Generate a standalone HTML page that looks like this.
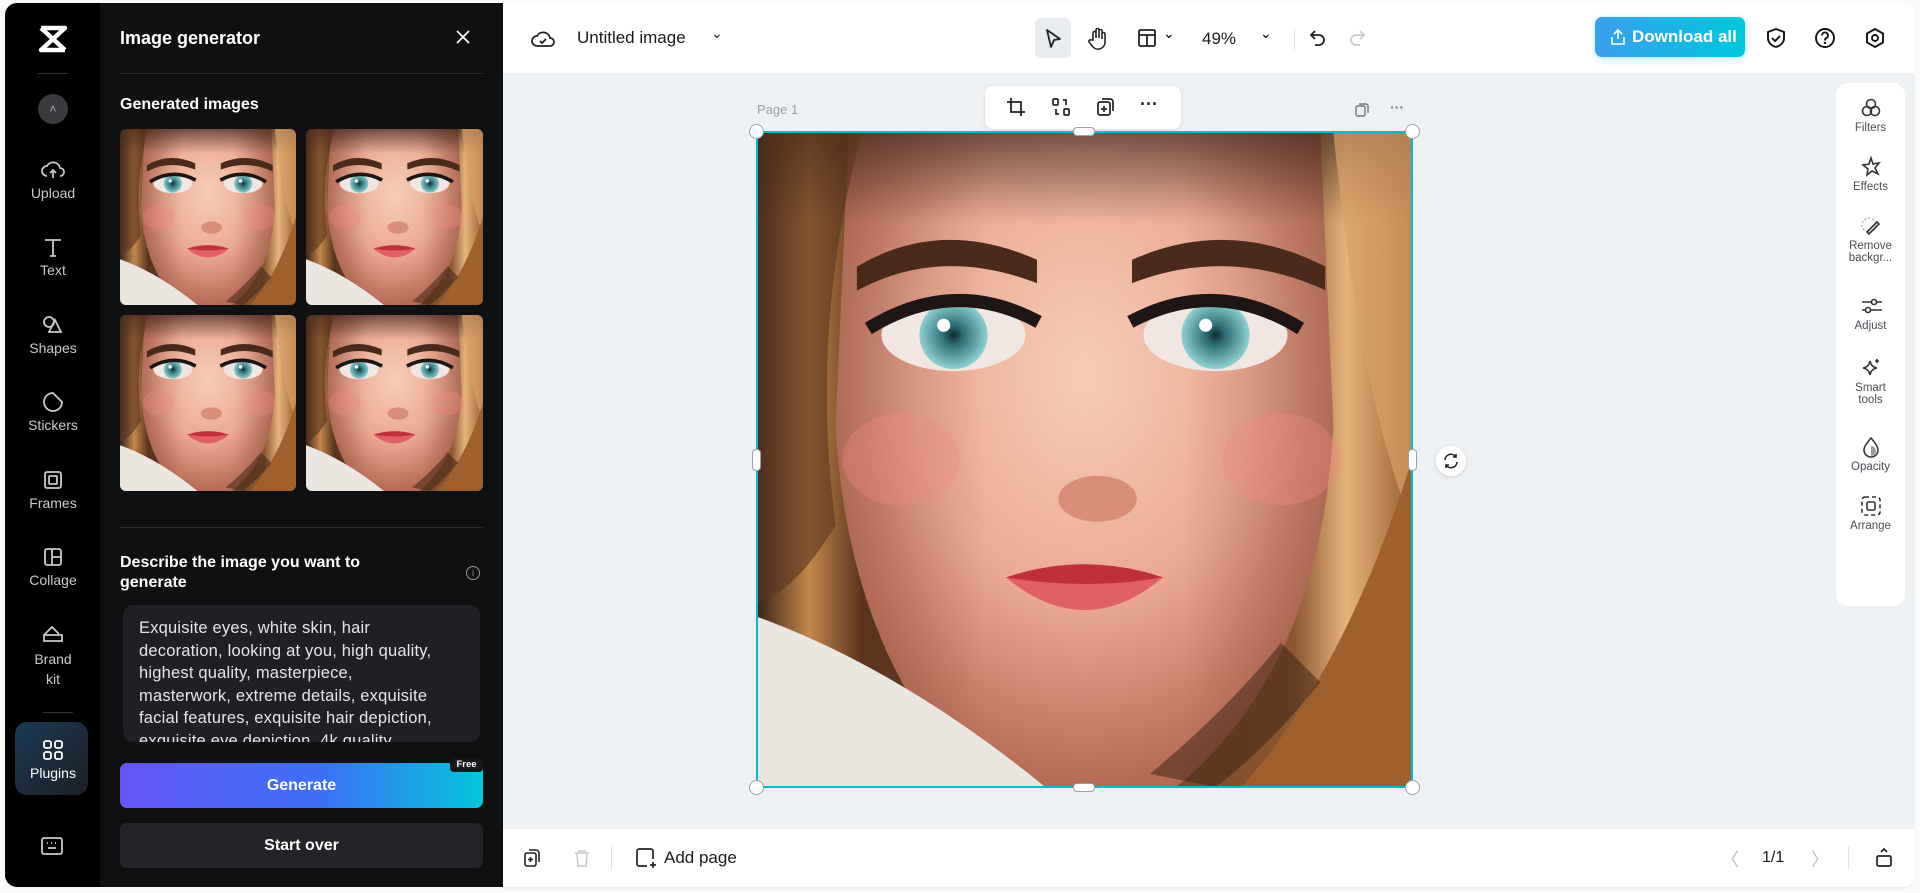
<!DOCTYPE html>
<html><head><meta charset="utf-8"><style>
*{box-sizing:border-box;margin:0;padding:0}
body{width:1920px;height:893px;background:#fafafa;font-family:"Liberation Sans",sans-serif;position:relative;overflow:hidden}
.a{position:absolute}
.rail{left:5px;top:3px;width:96px;height:884px;background:#000;border-radius:12px 0 0 12px}
.panel{left:100px;top:3px;width:403px;height:884px;background:#0f1012}
.ri{position:absolute;left:0;width:96px;text-align:center;color:#c9cacd;font-size:14px}
.ri svg{display:block;margin:0 auto 4px}
.top{left:503px;top:3px;width:1412px;height:70px;background:#fff;border-radius:0 12px 0 0}
.canvas{left:503px;top:73px;width:1412px;height:756px;background:#eef1f4}
.bot{left:503px;top:829px;width:1412px;height:58px;background:#fff;border-radius:0 0 12px 0;box-shadow:0 1px 2px rgba(0,0,0,.08)}
.rp{left:1836px;top:83px;width:69px;height:523px;background:#fff;border-radius:12px}
.rpi{position:absolute;left:0;width:69px;text-align:center;font-size:11.5px;color:#4a4d55;line-height:12px}
.rpi svg{display:block;margin:0 auto 3px}
.h{position:absolute;background:#fff;border:1px solid #9aa0a6}
</style></head><body>
<svg width="0" height="0" style="position:absolute">
<defs>
<linearGradient id="hair" x1="0" x2="1"><stop offset="0" stop-color="#3a2418"/><stop offset=".08" stop-color="#c4874a"/><stop offset=".16" stop-color="#5a341e"/><stop offset=".5" stop-color="#6b4028"/><stop offset=".82" stop-color="#8c5630"/><stop offset=".9" stop-color="#e6b47c"/><stop offset="1" stop-color="#9a5e30"/></linearGradient>
<linearGradient id="hairtop" x1="0" y1="0" x2="0" y2="1"><stop offset="0" stop-color="#2a1a14" stop-opacity=".6"/><stop offset="1" stop-color="#2a1a14" stop-opacity="0"/></linearGradient>
<radialGradient id="skin" cx=".5" cy=".38" r=".62"><stop offset="0" stop-color="#f6cdb8"/><stop offset=".55" stop-color="#eba994"/><stop offset="1" stop-color="#b66a55"/></radialGradient>
<radialGradient id="iris" cx=".5" cy=".5" r=".5"><stop offset="0" stop-color="#0f2a30"/><stop offset=".3" stop-color="#2f7078"/><stop offset="1" stop-color="#8fd0d2"/></radialGradient>
<linearGradient id="shade" x1="0" x2="1"><stop offset="0" stop-color="#7a3c2c" stop-opacity=".35"/><stop offset=".3" stop-color="#7a3c2c" stop-opacity="0"/><stop offset=".7" stop-color="#7a3c2c" stop-opacity="0"/><stop offset="1" stop-color="#7a3c2c" stop-opacity=".35"/></linearGradient>
<symbol id="face" viewBox="0 0 100 100" preserveAspectRatio="none">
<rect width="100" height="100" fill="url(#hair)"/>
<path d="M14 0 Q50 -3 86 0 L88 45 Q86 82 64 100 L34 100 Q14 80 12 45Z" fill="url(#skin)"/>
<path d="M14 0 Q50 -3 86 0 L88 45 Q86 82 64 100 L34 100 Q14 80 12 45Z" fill="url(#shade)"/>
<rect width="100" height="14" fill="url(#hairtop)"/>
<path d="M0 0 L16 0 Q8 30 12 60 Q6 70 0 72Z" fill="#5a3320" opacity=".6"/>
<path d="M88 0 L100 0 L100 60 Q92 40 88 0Z" fill="#d8a068" opacity=".7"/>
<path d="M0 74 Q22 82 44 100 L0 100Z" fill="#ebe6e0"/>
<path d="M100 50 Q90 82 74 100 L100 100Z" fill="#a0602e"/>
<path d="M60 98 Q72 88 80 78 L86 84 Q78 94 70 100Z" fill="#3a2014" opacity=".5"/>
<path d="M16 21 Q28 14 42 20 L42 22 Q28 17 16 23Z" fill="#4a2a1c" stroke="#4a2a1c" stroke-width="1.5"/>
<path d="M58 20 Q72 14 86 21 L86 23 Q72 17 58 22Z" fill="#4a2a1c" stroke="#4a2a1c" stroke-width="1.5"/>
<ellipse cx="30" cy="31" rx="11" ry="5.5" fill="#f0e6e2"/><circle cx="30" cy="31" r="5.2" fill="url(#iris)"/><circle cx="28.5" cy="29.5" r="1" fill="#fff"/>
<ellipse cx="70" cy="31" rx="11" ry="5.5" fill="#f0e6e2"/><circle cx="70" cy="31" r="5.2" fill="url(#iris)"/><circle cx="68.5" cy="29.5" r="1" fill="#fff"/>
<path d="M17 30 Q30 22 43 29" stroke="#1e1614" stroke-width="2" fill="none"/>
<path d="M57 29 Q70 22 83 30" stroke="#1e1614" stroke-width="2" fill="none"/>
<ellipse cx="52" cy="56" rx="6" ry="3.5" fill="#d98e7a"/>
<path d="M38 68 Q50 64 62 68 Q56 70 50 70 Q44 70 38 68Z" fill="#c0303c"/>
<path d="M38 68 Q50 70 62 68 Q50 78 38 68Z" fill="#e06068"/>
<ellipse cx="22" cy="50" rx="9" ry="7" fill="#f08a80" opacity=".35"/><ellipse cx="80" cy="50" rx="9" ry="7" fill="#f08a80" opacity=".35"/>
</symbol>
</defs></svg>

<div class="a rail">
  <svg class="a" style="left:33px;top:22px" width="30" height="28" viewBox="0 0 30 28"><path d="M3 3h24L3 25h24M3 3l24 22" stroke="#fff" stroke-width="4.5" fill="none" stroke-linejoin="round"/></svg>
  <div class="a" style="left:33px;top:70px;width:30px;height:1px;background:#333"></div>
  <div class="a" style="left:33px;top:91px;width:30px;height:30px;border-radius:50%;background:#3a3b3f;color:#aaa;text-align:center;font-size:12px;line-height:30px">&#708;</div>
  <div class="ri" style="top:156px"><svg width="24" height="22" viewBox="0 0 24 22"><path d="M6 17a5 5 0 0 1 0-10 7 7 0 0 1 13 2 4 4 0 0 1 0 8M12 19v-8M9 14l3-3 3 3" stroke="#c9cacd" stroke-width="1.8" fill="none"/></svg>Upload</div>
  <div class="ri" style="top:233px"><svg width="22" height="22" viewBox="0 0 22 22"><path d="M3 4h16M11 4v16M8 20h6" stroke="#c9cacd" stroke-width="1.8" fill="none"/></svg>Text</div>
  <div class="ri" style="top:311px"><svg width="24" height="22" viewBox="0 0 24 22"><circle cx="8" cy="8" r="5" stroke="#c9cacd" stroke-width="1.8" fill="none"/><path d="M14 6l6 12H8z" stroke="#c9cacd" stroke-width="1.8" fill="none"/></svg>Shapes</div>
  <div class="ri" style="top:388px"><svg width="22" height="22" viewBox="0 0 22 22"><path d="M11 2a9 9 0 1 0 9 9l-9-9z" stroke="#c9cacd" stroke-width="1.8" fill="none"/></svg>Stickers</div>
  <div class="ri" style="top:466px"><svg width="22" height="22" viewBox="0 0 22 22"><rect x="3" y="3" width="16" height="16" rx="2" stroke="#c9cacd" stroke-width="1.8" fill="none"/><rect x="7" y="7" width="8" height="8" rx="1" stroke="#c9cacd" stroke-width="1.8" fill="none"/></svg>Frames</div>
  <div class="ri" style="top:543px"><svg width="22" height="22" viewBox="0 0 22 22"><rect x="3" y="3" width="16" height="16" rx="2" stroke="#c9cacd" stroke-width="1.8" fill="none"/><path d="M10 3v16M10 11h9" stroke="#c9cacd" stroke-width="1.8"/></svg>Collage</div>
  <div class="ri" style="top:620px;line-height:20px"><svg width="24" height="22" viewBox="0 0 24 22"><path d="M3 12l8-8 7 7M3 12h18v6H3z" stroke="#c9cacd" stroke-width="1.8" fill="none"/></svg>Brand<br>kit</div>
  <div class="a" style="left:38px;top:709px;width:30px;height:1px;background:#333"></div>
  <div class="a" style="left:10px;top:719px;width:73px;height:73px;border-radius:12px;background:linear-gradient(135deg,#1b3a55,#1c1e24)"></div>
  <div class="ri" style="top:736px;color:#fff"><svg width="22" height="22" viewBox="0 0 22 22"><g stroke="#fff" stroke-width="1.8" fill="none"><rect x="2" y="2" width="7" height="7" rx="2"/><rect x="13" y="2" width="7" height="7" rx="2"/><rect x="2" y="13" width="7" height="7" rx="2"/><rect x="13" y="13" width="7" height="7" rx="2"/></g></svg>Plugins</div>
  <svg class="a" style="left:35px;top:833px" width="24" height="20" viewBox="0 0 24 20"><rect x="2" y="2" width="20" height="16" rx="2" stroke="#c9cacd" stroke-width="1.8" fill="none"/><path d="M7 7h1M11 7h1M15 7h1M8 12h8" stroke="#c9cacd" stroke-width="1.8"/></svg>
</div>

<div class="a panel">
  <div class="a" style="left:20px;top:25px;color:#fff;font-size:18px;font-weight:bold">Image generator</div>
  <svg class="a" style="left:356px;top:27px" width="14" height="14" viewBox="0 0 14 14"><path d="M1 1l12 12M13 1L1 13" stroke="#fff" stroke-width="1.8"/></svg>
  <div class="a" style="left:20px;top:70px;width:363px;height:1px;background:#2c2d31"></div>
  <div class="a" style="left:20px;top:93px;color:#fff;font-size:16px;font-weight:bold">Generated images</div>
  <svg class="a" style="left:20px;top:126px;border-radius:6px" width="176" height="176"><use href="#face"/></svg>
  <svg class="a" style="left:206px;top:126px;border-radius:6px" width="177" height="176"><use href="#face"/></svg>
  <svg class="a" style="left:20px;top:312px;border-radius:6px" width="176" height="176"><use href="#face"/></svg>
  <svg class="a" style="left:206px;top:312px;border-radius:6px" width="177" height="176"><use href="#face"/></svg>
  <div class="a" style="left:20px;top:524px;width:363px;height:1px;background:#2c2d31"></div>
  <div class="a" style="left:20px;top:550px;width:300px;color:#fff;font-size:16px;font-weight:bold;line-height:20px">Describe the image you want to generate</div>
  <div class="a" style="left:366px;top:563px;width:14px;height:14px;border:1.3px solid #999;border-radius:50%;color:#999;font-size:9px;text-align:center;line-height:12px">i</div>
  <div class="a" style="left:23px;top:602px;width:357px;height:137px;background:#1f2024;border-radius:10px;overflow:hidden;padding:12px 10px 0 16px;color:#e6e6e8;font-size:16.5px;line-height:22.5px;letter-spacing:.2px;white-space:nowrap">Exquisite eyes, white skin, hair<br>decoration, looking at you, high quality,<br>highest quality, masterpiece,<br>masterwork, extreme details, exquisite<br>facial features, exquisite hair depiction,<br>exquisite eye depiction, 4k quality</div>
  <div class="a" style="left:20px;top:760px;width:363px;height:45px;border-radius:7px;background:linear-gradient(90deg,#6656f8,#3c6ff5 55%,#04c7dc);color:#fff;font-weight:bold;font-size:16px;text-align:center;line-height:45px">Generate</div>
  <div class="a" style="left:350px;top:755px;width:33px;height:14px;border-radius:4px;background:#16171a;color:#fff;font-size:9.5px;font-weight:bold;text-align:center;line-height:14px">Free</div>
  <div class="a" style="left:20px;top:820px;width:363px;height:45px;border-radius:7px;background:#232428;color:#fff;font-weight:bold;font-size:16px;text-align:center;line-height:45px">Start over</div>
</div>
<div class="a" style="left:503px;top:415px;width:8px;height:62px;background:#1a1b1e;border-radius:0 8px 8px 0"></div>

<div class="a canvas"></div>
<div class="a top">
  <svg class="a" style="left:28px;top:25px" width="24" height="22" viewBox="0 0 24 22"><path d="M6 18a5 5 0 0 1 0-10 7 7 0 0 1 13 2 4 4 0 0 1 0 8z" stroke="#222" stroke-width="1.8" fill="none"/><path d="M9 13l2 2 4-4" stroke="#222" stroke-width="1.8" fill="none"/></svg>
  <div class="a" style="left:74px;top:25px;font-size:17px;color:#1a1a1a">Untitled image</div>
  <div class="a" style="left:208px;top:22px;font-size:14px;color:#222">&#8964;</div>
  <div class="a" style="left:532px;top:15px;width:36px;height:40px;border-radius:6px;background:#e8ebef"></div>
  <svg class="a" style="left:540px;top:25px" width="20" height="22" viewBox="0 0 20 22"><path d="M4 2l13 9-6 1-3 7z" stroke="#222" stroke-width="1.8" fill="none" stroke-linejoin="round"/></svg>
  <svg class="a" style="left:584px;top:24px" width="22" height="24" viewBox="0 0 22 24"><path d="M6 13V6a1.5 1.5 0 0 1 3 0v5V3a1.5 1.5 0 0 1 3 0v8V4a1.5 1.5 0 0 1 3 0v8-5a1.5 1.5 0 0 1 3 0v8a7 7 0 0 1-12 5l-4-5a1.5 1.5 0 0 1 2-2z" stroke="#222" stroke-width="1.6" fill="none"/></svg>
  <svg class="a" style="left:634px;top:25px" width="20" height="20" viewBox="0 0 20 20"><rect x="2" y="2" width="16" height="16" rx="1.5" stroke="#222" stroke-width="1.8" fill="none"/><path d="M2 7h16M10 7v11" stroke="#222" stroke-width="1.8"/></svg>
  <div class="a" style="left:660px;top:22px;font-size:14px">&#8964;</div>
  <div class="a" style="left:699px;top:26px;font-size:17px;color:#1a1a1a">49%</div>
  <div class="a" style="left:757px;top:22px;font-size:14px">&#8964;</div>
  <div class="a" style="left:791px;top:25px;width:1px;height:22px;background:#e3e3e3"></div>
  <svg class="a" style="left:805px;top:25px" width="20" height="20" viewBox="0 0 20 20"><path d="M7 3L3 7l4 4M3 7h8a5 5 0 0 1 0 10H7" stroke="#222" stroke-width="1.8" fill="none"/></svg>
  <svg class="a" style="left:844px;top:25px" width="20" height="20" viewBox="0 0 20 20"><path d="M13 3l4 4-4 4M17 7H9a5 5 0 0 0 0 10h4" stroke="#c8ccd2" stroke-width="1.8" fill="none"/></svg>
  <div class="a" style="left:1092px;top:14px;width:150px;height:40px;border-radius:7px;background:linear-gradient(90deg,#3a9ff0,#00c8dc);color:#fff;font-weight:bold;font-size:17px;line-height:40px;padding-left:37px;box-shadow:0 2px 8px rgba(0,180,220,.3)">Download all</div>
  <svg class="a" style="left:1106px;top:25px" width="18" height="18" viewBox="0 0 18 18"><path d="M9 11V2M5 6l4-4 4 4M3 9v7h12V9" stroke="#fff" stroke-width="1.6" fill="none"/></svg>
  <svg class="a" style="left:1262px;top:24px" width="22" height="22" viewBox="0 0 22 22"><path d="M11 2l8 3v6c0 5-4 8-8 9-4-1-8-4-8-9V5z" stroke="#111" stroke-width="1.9" fill="none"/><path d="M7 11l3 3 5-5" stroke="#111" stroke-width="1.9" fill="none"/></svg>
  <svg class="a" style="left:1311px;top:24px" width="22" height="22" viewBox="0 0 22 22"><circle cx="11" cy="11" r="9" stroke="#111" stroke-width="1.9" fill="none"/><path d="M8 8.5a3 3 0 1 1 4 2.8c-1 .4-1 1-1 2.2" stroke="#111" stroke-width="1.9" fill="none"/><circle cx="11" cy="16" r="1.2" fill="#111"/></svg>
  <svg class="a" style="left:1361px;top:24px" width="22" height="22" viewBox="0 0 22 22"><path d="M11 2l8 4.5v9L11 20l-8-4.5v-9z" stroke="#111" stroke-width="1.9" fill="none"/><circle cx="11" cy="11" r="3" stroke="#111" stroke-width="1.9" fill="none"/></svg>
</div>

<div class="a" style="left:757px;top:102px;font-size:13px;color:#9aa0a8">Page 1</div>
<div class="a" style="left:985px;top:86px;width:196px;height:43px;background:#fff;border-radius:8px;box-shadow:0 1px 4px rgba(0,0,0,.1)"></div>
<svg class="a" style="left:1006px;top:97px" width="20" height="20" viewBox="0 0 20 20"><path d="M5 1v14h14M1 5h14v14" stroke="#222" stroke-width="1.8" fill="none"/></svg>
<svg class="a" style="left:1051px;top:97px" width="20" height="20" viewBox="0 0 20 20"><g stroke="#222" stroke-width="1.7" fill="none"><rect x="2" y="2" width="5" height="6" rx="1"/><rect x="13" y="12" width="5" height="6" rx="1"/><path d="M12 3h3v5M8 17H5v-5"/></g></svg>
<svg class="a" style="left:1095px;top:97px" width="20" height="20" viewBox="0 0 20 20"><rect x="3" y="5" width="12" height="13" rx="2" stroke="#222" stroke-width="1.7" fill="none"/><path d="M7 2h8a3 3 0 0 1 3 3v9M9 9v6M6 12h6" stroke="#222" stroke-width="1.7" fill="none"/></svg>
<div class="a" style="left:1140px;top:94px;font-size:18px;font-weight:bold;color:#222">&middot;&middot;&middot;</div>
<svg class="a" style="left:1354px;top:102px" width="16" height="16" viewBox="0 0 16 16"><rect x="2" y="4" width="9" height="10" rx="1.5" stroke="#777" stroke-width="1.4" fill="none"/><path d="M5 2h7a2 2 0 0 1 2 2v7" stroke="#777" stroke-width="1.4" fill="none"/></svg>
<div class="a" style="left:1390px;top:99px;font-size:14px;color:#777;font-weight:bold">&middot;&middot;&middot;</div>

<svg class="a" style="left:757px;top:132px" width="655" height="655"><use href="#face"/></svg>
<div class="a" style="left:756px;top:131px;width:657px;height:657px;border:2px solid #00bcd4"></div>
<div class="h" style="left:749px;top:124px;width:15px;height:15px;border-radius:50%"></div>
<div class="h" style="left:1405px;top:124px;width:15px;height:15px;border-radius:50%"></div>
<div class="h" style="left:749px;top:780px;width:15px;height:15px;border-radius:50%"></div>
<div class="h" style="left:1405px;top:780px;width:15px;height:15px;border-radius:50%"></div>
<div class="h" style="left:1073px;top:127px;width:22px;height:9px;border-radius:4px"></div>
<div class="h" style="left:1073px;top:783px;width:22px;height:9px;border-radius:4px"></div>
<div class="h" style="left:752px;top:449px;width:9px;height:22px;border-radius:4px"></div>
<div class="h" style="left:1408px;top:449px;width:9px;height:22px;border-radius:4px"></div>
<div class="a" style="left:1436px;top:446px;width:30px;height:30px;border-radius:50%;background:#fff;box-shadow:0 1px 4px rgba(0,0,0,.15)"></div>
<svg class="a" style="left:1442px;top:452px" width="18" height="18" viewBox="0 0 18 18"><path d="M3 8a6 6 0 0 1 11-3M15 10a6 6 0 0 1-11 3M14 2v3h-3M4 16v-3h3" stroke="#222" stroke-width="1.6" fill="none"/></svg>

<div class="a rp">
  <div class="rpi" style="top:14px"><svg width="22" height="22" viewBox="0 0 22 22"><g stroke="#333" stroke-width="1.6" fill="none"><circle cx="11" cy="7" r="4.5"/><circle cx="7" cy="14" r="4.5"/><circle cx="15" cy="14" r="4.5"/></g></svg>Filters</div>
  <div class="rpi" style="top:73px"><svg width="22" height="22" viewBox="0 0 22 22"><path d="M11 2l2 6 6-1-4 5 3 6-6-3-5 4 1-6-5-4 6-1z" stroke="#333" stroke-width="1.6" fill="none"/></svg>Effects</div>
  <div class="rpi" style="top:132px"><svg width="22" height="22" viewBox="0 0 22 22"><circle cx="9" cy="10" r="7" stroke="#aaa" stroke-width="1.4" stroke-dasharray="2 2" fill="none"/><path d="M7 17l10-10 2 2-10 10z" stroke="#333" stroke-width="1.6" fill="none"/></svg>Remove<br>backgr...</div>
  <div class="rpi" style="top:212px"><svg width="22" height="22" viewBox="0 0 22 22"><g stroke="#333" stroke-width="1.6" fill="none"><path d="M2 7h20M2 15h20"/><circle cx="14" cy="7" r="2.5" fill="#fff"/><circle cx="8" cy="15" r="2.5" fill="#fff"/></g></svg>Adjust</div>
  <div class="rpi" style="top:274px"><svg width="22" height="22" viewBox="0 0 22 22"><path d="M10 4q1 6 7 7-6 1-7 7-1-6-7-7 6-1 7-7zM17 2v4M15 4h4" stroke="#333" stroke-width="1.6" fill="none"/></svg>Smart<br>tools</div>
  <div class="rpi" style="top:353px"><svg width="22" height="22" viewBox="0 0 22 22"><path d="M11 2q7 8 7 12a7 7 0 0 1-14 0q0-4 7-12z" stroke="#333" stroke-width="1.6" fill="none"/><path d="M11 10v10a4 4 0 0 0 0-10z" fill="#999"/></svg>Opacity</div>
  <div class="rpi" style="top:412px"><svg width="22" height="22" viewBox="0 0 22 22"><rect x="2" y="2" width="18" height="18" rx="3" stroke="#333" stroke-width="1.6" stroke-dasharray="4 3" fill="none"/><rect x="7" y="7" width="8" height="8" rx="1.5" stroke="#333" stroke-width="1.6" fill="none"/></svg>Arrange</div>
</div>

<div class="a bot">
  <svg class="a" style="left:20px;top:19px" width="18" height="20" viewBox="0 0 18 20"><rect x="2" y="5" width="11" height="13" rx="2" stroke="#222" stroke-width="1.6" fill="none"/><path d="M6 2h7a3 3 0 0 1 3 3v9M7.5 9v5M5 11.5h5" stroke="#222" stroke-width="1.6" fill="none"/></svg>
  <svg class="a" style="left:70px;top:19px" width="18" height="20" viewBox="0 0 18 20"><path d="M2 5h14M6 5V3h6v2M4 5l1 13h8l1-13" stroke="#c8ccd2" stroke-width="1.6" fill="none"/></svg>
  <div class="a" style="left:108px;top:17px;width:1px;height:24px;background:#e3e3e3"></div>
  <svg class="a" style="left:132px;top:18px" width="22" height="22" viewBox="0 0 22 22"><path d="M12 19H4a2 2 0 0 1-2-2V4a2 2 0 0 1 2-2h12a2 2 0 0 1 2 2v8M18 15v6M15 18h6" stroke="#222" stroke-width="1.7" fill="none"/></svg>
  <div class="a" style="left:161px;top:19px;font-size:17px;color:#1a1a1a">Add page</div>
  <div class="a" style="left:1218px;top:17px;font-size:18px;color:#bbb">&#12296;</div>
  <div class="a" style="left:1259px;top:20px;font-size:16px;color:#1a1a1a">1/1</div>
  <div class="a" style="left:1308px;top:17px;font-size:18px;color:#bbb">&#12297;</div>
  <div class="a" style="left:1345px;top:17px;width:1px;height:24px;background:#e3e3e3"></div>
  <svg class="a" style="left:1372px;top:17px" width="18" height="22" viewBox="0 0 18 22"><rect x="2" y="10" width="14" height="10" rx="1.5" stroke="#222" stroke-width="1.7" fill="none"/><path d="M6 6l3-3 3 3" stroke="#222" stroke-width="1.7" fill="none"/></svg>
</div>
</body></html>
